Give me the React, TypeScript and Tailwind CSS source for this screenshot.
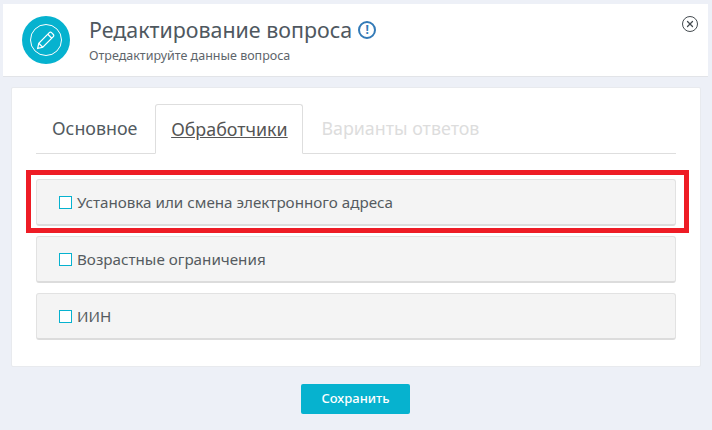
import { X } from "lucide-react";

const font = { fontFamily: '"Noto Sans", sans-serif' };

function HandlerRow({ label, highlighted }: { label: string; highlighted?: boolean }) {
  return (
    <div className="relative">
      <div className="flex h-[47px] items-center rounded-[3px] border border-[#e2e2e2] border-b-2 border-b-[#dcdcdc] bg-[#f4f4f4] pl-[22px]">
        <span className="mr-[5px] h-[13px] w-[13px] shrink-0 border border-[#06b2cf] bg-white" />
        <span className="text-[15.2px] text-[#555b60]">{label}</span>
      </div>
      {highlighted && (
        <div className="absolute top-[-9px] right-[-13px] bottom-[-7px] left-[-10px] border-[5px] border-[#ee1c25]" />
      )}
    </div>
  );
}

export default function App() {
  return (
    <div className="h-[430px] w-[712px] overflow-hidden bg-[#edf0f7] pt-1" style={font}>
      <div className="relative mr-[4px] ml-[3px] flex h-[73px] items-center border-b border-[#e2e4e8] bg-white pl-[19px]">
        <div className="flex h-12 w-12 items-center justify-center rounded-full bg-[#06b2cf]">
          <div className="flex h-8 w-8 items-center justify-center rounded-full border-[1.5px] border-white">
            <svg width="20" height="20" viewBox="0 0 18 18" fill="none" stroke="white" strokeWidth="1.1">
              <path d="M1.5 16.5l1-4.6L12 2.4a1.4 1.4 0 0 1 2 0l1.6 1.6a1.4 1.4 0 0 1 0 2l-9.5 9.5z" />
              <path d="M10.6 3.8l3.6 3.6M2.5 11.9l3.6 3.6" />
            </svg>
          </div>
        </div>
        <div className="ml-[19px]">
          <div className="flex items-center text-[21.4px] leading-7 text-[#4f585f]">
            Редактирование вопроса
            <span className="ml-[6px] flex h-[18px] w-[18px] items-center justify-center rounded-full border-2 border-[#337ab7] text-[12px] font-bold text-[#337ab7]">
              !
            </span>
          </div>
          <div className="mt-1 text-[12.5px] leading-4 text-[#5e656b]">Отредактируйте данные вопроса</div>
        </div>
        <button className="absolute top-[12px] right-[10px] flex h-4 w-4 items-center justify-center rounded-full border border-[#444b50] text-[#444b50]">
          <X size={10} strokeWidth={3} />
        </button>
      </div>

      <div className="mx-[11px] mt-[10px] h-[280px] rounded-[2px] border border-[#e8eaee] bg-white px-[24px] pt-[16px]">
        <div className="flex h-[50px] items-stretch border-b border-[#dedede] text-[17.85px]">
          <div className="flex items-center px-4 text-[#525a60]">Основное</div>
          <div className="mb-[-1px] ml-[2px] flex w-[148px] items-center justify-center rounded-t-[3px] border border-[#dedede] border-b-white bg-white text-[#555] underline">
            Обработчики
          </div>
          <div className="flex items-center px-[18px] text-[#dddddd]">Варианты ответов</div>
        </div>
        <div className="mt-[25px] flex flex-col gap-[10px]">
          <HandlerRow label="Установка или смена электронного адреса" highlighted />
          <HandlerRow label="Возрастные ограничения" />
          <HandlerRow label="ИИН" />
        </div>
      </div>

      <div className="mt-[17px] flex justify-center pr-[1px]">
        <button className="h-[30px] w-[109px] rounded-[2px] bg-[#06b2cf] text-[13px] font-medium text-white">
          Сохранить
        </button>
      </div>
    </div>
  );
}
